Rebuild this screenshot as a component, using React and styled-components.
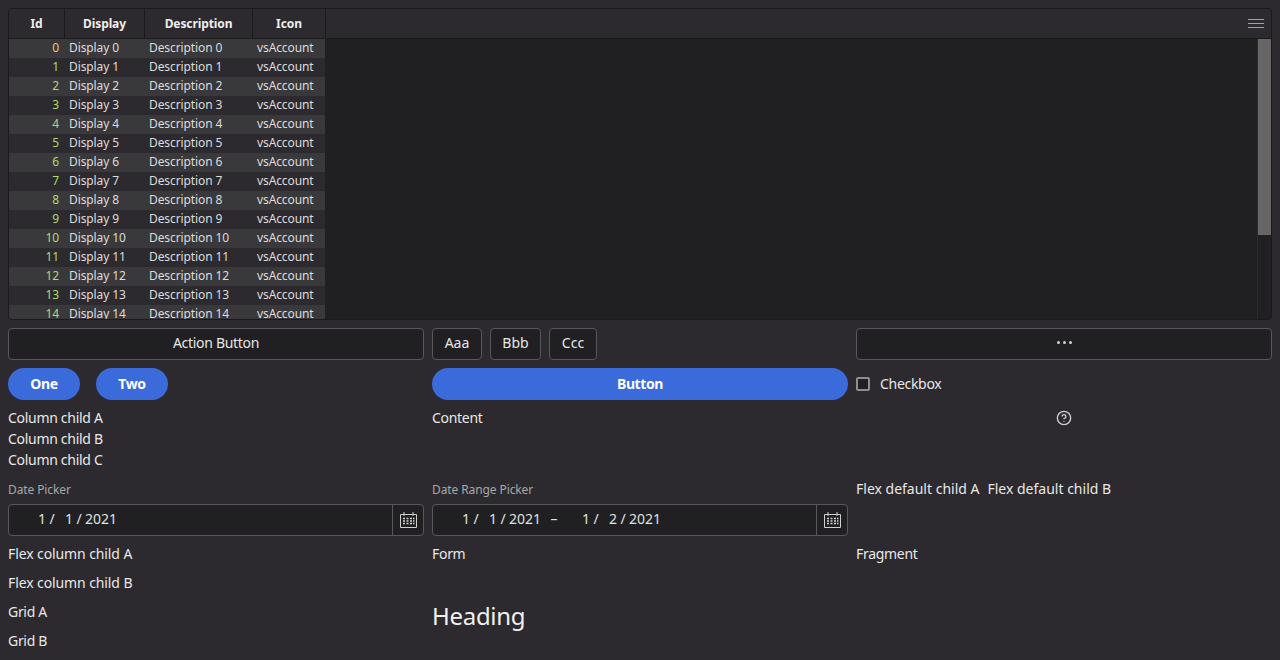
import React from 'react';
import styled, { createGlobalStyle } from 'styled-components';
import { CircleHelp } from 'lucide-react';

const Global = createGlobalStyle`
  html, body { margin: 0; background: #2c2a2e; }
  body { height: 660px; overflow: hidden; font-family: "Noto Sans", "Open Sans", sans-serif; color: #e8e8e8; font-size: 14px; }
`;

const Page = styled.div`
  display: grid;
  grid-template-columns: repeat(3, 416px);
  column-gap: 8px;
  row-gap: 8px;
  padding: 8px;
`;

const TableFrame = styled.div`
  grid-column: 1 / 4;
  height: 312px;
  box-sizing: border-box;
  border: 1px solid #1a191b;
  border-radius: 4px;
  background: #201f21;
  overflow: hidden;
  display: flex;
  flex-direction: column;
`;

const HeaderRow = styled.div`
  display: flex;
  height: 30px;
  flex: none;
  box-sizing: border-box;
  background: #2c2a2e;
  border-bottom: 1px solid #1a191b;
`;

const HeaderCell = styled.div`
  width: ${p => p.$w}px;
  box-sizing: border-box;
  border-right: 1px solid #1a191b;
  display: flex;
  align-items: center;
  justify-content: center;
  font-size: 12px;
  font-weight: 700;
  letter-spacing: -0.1px;
  color: #eee;
`;

const HeaderSpace = styled.div`
  flex: 1;
  display: flex;
  align-items: center;
  justify-content: flex-end;
  padding-right: 7px;
`;

const MenuIcon = styled.div`
  width: 16px;
  height: 9px;
  border-top: 1px solid #a0a0a0;
  border-bottom: 1px solid #a0a0a0;
  box-sizing: border-box;
  position: relative;
  &::after {
    content: "";
    position: absolute;
    left: 0;
    right: 0;
    top: 3px;
    height: 1px;
    background: #a0a0a0;
  }
`;

const TableBody = styled.div`
  flex: 1;
  min-height: 0;
  display: flex;
`;

const Rows = styled.div`
  flex: 1;
  overflow: hidden;
`;

const Row = styled.div`
  display: flex;
  width: 316px;
  height: 19px;
  box-sizing: border-box;
  padding-bottom: 2px;
  align-items: center;
  font-size: 12px;
  letter-spacing: -0.1px;
  color: #dcdcdc;
  background: ${p => (p.$even ? '#39383b' : '#2c2a2e')};
`;

const Cell = styled.div`
  width: ${p => p.$w}px;
  box-sizing: border-box;
  padding: 0 5px;
  text-align: ${p => (p.$num ? 'right' : 'left')};
  color: ${p => p.$color || 'inherit'};
  white-space: nowrap;
`;

const ScrollTrack = styled.div`
  width: 13px;
  border-left: 1px solid #2c2a2e;
  background: #201f21;
`;

const ScrollThumb = styled.div`
  height: 196px;
  background: #666;
`;

const OutlineButton = styled.button`
  height: 32px;
  box-sizing: border-box;
  width: ${p => (p.$w ? `${p.$w}px` : '100%')};
  background: #201f21;
  border: 1px solid #58575a;
  border-radius: 4px;
  color: #e8e8e8;
  font: inherit;
  letter-spacing: ${p => (p.$tight ? '-0.3px' : '0')};
  padding: 0 0 3px;
  display: flex;
  align-items: center;
  justify-content: center;
`;

const Dots = styled.span`
  display: flex;
  gap: 3px;
  i {
    width: 3px;
    height: 3px;
    border-radius: 50%;
    background: #d0d0d0;
  }
`;

const Segmented = styled.div`
  display: flex;
  gap: 8px;
`;

const PillRow = styled.div`
  display: flex;
  gap: 16px;
`;

const Pill = styled.button`
  height: 32px;
  width: ${p => (p.$w ? `${p.$w}px` : '100%')};
  border: none;
  border-radius: 16px;
  background: #3b6bdb;
  color: #fff;
  font: inherit;
  font-weight: 700;
  letter-spacing: -0.4px;
  padding: 0 0 2px;
`;

const CheckRow = styled.label`
  display: flex;
  align-items: center;
  gap: 10px;
  height: 32px;
  letter-spacing: -0.3px;
  span { padding-bottom: 2px; }
`;

const CheckBox = styled.i`
  width: 14px;
  height: 14px;
  box-sizing: border-box;
  border: 2px solid #8f8f91;
  border-radius: 2px;
  background: #201f21;
`;

const Stack = styled.div`
  display: flex;
  flex-direction: column;
  gap: ${p => p.$gap || 0}px;
`;

const Line = styled.div`
  line-height: 19px;
  height: 21px;
  white-space: nowrap;
  letter-spacing: ${p => (p.$tight ? '-0.3px' : '-0.1px')};
`;

const HelpCell = styled.div`
  height: 21px;
  padding-bottom: 1px;
  box-sizing: border-box;
  display: flex;
  align-items: center;
  justify-content: center;
  color: #d0d0d0;
`;

const FieldLabel = styled.div`
  font-size: 12px;
  line-height: 21px;
  color: #a8a8a8;
  letter-spacing: -0.1px;
  margin-bottom: 4px;
`;

const DateBox = styled.div`
  height: 32px;
  box-sizing: border-box;
  display: flex;
  background: #201f21;
  border: 1px solid #58575a;
  border-radius: 4px;
`;

const DateText = styled.div`
  flex: 1;
  display: flex;
  align-items: center;
  padding: 0 0 3px 23px;
  color: #e0e0e0;
`;

const Seg = styled.span`
  width: ${p => p.$w}px;
  text-align: ${p => p.$align || 'center'};
`;

const Dash = styled.span`
  width: 26px;
  margin-right: 9px;
  text-align: center;
`;

const CalButton = styled.div`
  width: 30px;
  border-left: 1px solid #58575a;
  display: flex;
  align-items: center;
  justify-content: center;
  color: #d0d0d0;
`;

const Flexed = styled.div`
  display: flex;
  gap: 8px;
  line-height: 19px;
`;

const Heading = styled.h2`
  margin: 35px 0 0;
  font-size: 24px;
  line-height: 32px;
  font-weight: 400;
  letter-spacing: -0.3px;
  color: #f0f0f0;
`;

const CalendarIcon = () => (
  <svg width="17" height="16" viewBox="0 0 17 16" fill="none" stroke="currentColor">
    <path d="M.5 2.5h16v13H.5zM4 0v4M13 0v4" />
    <path d="M3 6.5h2M6.5 6.5h2M10 6.5h2M13 6.5h1.5M3 9h2M6.5 9h2M10 9h2M13 9h1.5M3 11.5h2M6.5 11.5h2M10 11.5h2M13 11.5h1.5" strokeWidth="1.5" />
  </svg>
);

const DatePart = ({ m, d }) => (
  <>
    <Seg $w={14} $align="right">{m}</Seg>
    <Seg $w={12}>/</Seg>
    <Seg $w={15} $align="right">{d}</Seg>
    <Seg $w={12}>/</Seg>
    <Seg $w={32}>2021</Seg>
  </>
);

export default function App() {
  const rows = Array.from({ length: 15 }, (_, i) => i);
  return (
    <Page>
      <Global />
      <TableFrame>
        <HeaderRow>
          <HeaderCell $w={56}>Id</HeaderCell>
          <HeaderCell $w={80}>Display</HeaderCell>
          <HeaderCell $w={108}>Description</HeaderCell>
          <HeaderCell $w={73}>Icon</HeaderCell>
          <HeaderSpace><MenuIcon /></HeaderSpace>
        </HeaderRow>
        <TableBody>
          <Rows>
            {rows.map(i => (
              <Row key={i} $even={i % 2 === 0}>
                <Cell $w={55} $num $color={i === 0 ? '#e8cc60' : '#a8dc70'}>{i}</Cell>
                <Cell $w={80}>Display {i}</Cell>
                <Cell $w={108}>Description {i}</Cell>
                <Cell $w={73}>vsAccount</Cell>
              </Row>
            ))}
          </Rows>
          <ScrollTrack><ScrollThumb /></ScrollTrack>
        </TableBody>
      </TableFrame>

      <OutlineButton $tight>Action Button</OutlineButton>
      <Segmented>
        <OutlineButton $w={50}>Aaa</OutlineButton>
        <OutlineButton $w={51}>Bbb</OutlineButton>
        <OutlineButton $w={48}>Ccc</OutlineButton>
      </Segmented>
      <OutlineButton><Dots><i /><i /><i /></Dots></OutlineButton>

      <PillRow>
        <Pill $w={72}>One</Pill>
        <Pill $w={72}>Two</Pill>
      </PillRow>
      <Pill>Button</Pill>
      <CheckRow><CheckBox /><span>Checkbox</span></CheckRow>

      <Stack>
        <Line $tight>Column child A</Line>
        <Line $tight>Column child B</Line>
        <Line $tight>Column child C</Line>
      </Stack>
      <Line $tight>Content</Line>
      <HelpCell><CircleHelp size={16} strokeWidth={2} /></HelpCell>

      <div>
        <FieldLabel>Date Picker</FieldLabel>
        <DateBox>
          <DateText><DatePart m="1" d="1" /></DateText>
          <CalButton><CalendarIcon /></CalButton>
        </DateBox>
      </div>
      <div>
        <FieldLabel>Date Range Picker</FieldLabel>
        <DateBox>
          <DateText>
            <DatePart m="1" d="1" />
            <Dash>–</Dash>
            <DatePart m="1" d="2" />
          </DateText>
          <CalButton><CalendarIcon /></CalButton>
        </DateBox>
      </div>
      <Flexed>
        <span>Flex default child A</span>
        <span>Flex default child B</span>
      </Flexed>

      <Stack $gap={8}>
        <Line>Flex column child A</Line>
        <Line>Flex column child B</Line>
        <Line $tight>Grid A</Line>
        <Line $tight>Grid B</Line>
      </Stack>
      <div>
        <Line $tight>Form</Line>
        <Heading>Heading</Heading>
      </div>
      <Line $tight>Fragment</Line>
    </Page>
  );
}
